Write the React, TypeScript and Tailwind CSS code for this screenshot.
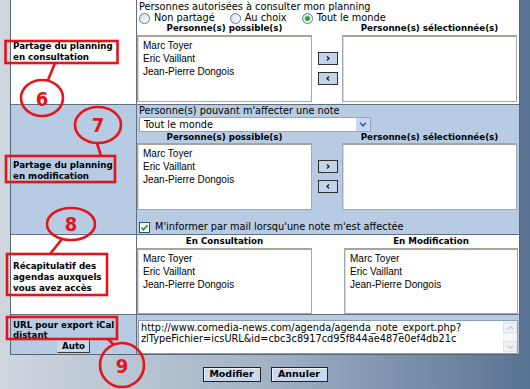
import React from 'react'

const people = ['Marc Toyer', 'Eric Vaillant', 'Jean-Pierre Dongois']

function ListBox({ items = [], className = '' }: { items?: string[]; className?: string }) {
  return (
    <div
      className={`bg-white border border-[#9fa9b4] border-t-2 border-t-[#a9a398] shadow-[inset_1px_0_0_#dedad2] pl-[5px] pt-[2px] font-['Liberation_Sans',Arial,sans-serif] text-[10px] leading-[13px] text-black ${className}`}
    >
      {items.map((i) => (
        <div key={i}>{i}</div>
      ))}
    </div>
  )
}

function MoveBtn({ dir }: { dir: 'r' | 'l' }) {
  return (
    <div className="w-[20px] h-[13px] bg-[#c3d4ea] border border-[#2e2e2e] flex items-center justify-center">
      <svg width="4" height="5" viewBox="0 0 4 5">
        <path
          d={dir === 'r' ? 'M1 0.5 L3 2.5 L1 4.5' : 'M3 0.5 L1 2.5 L3 4.5'}
          stroke="#1a1a1a"
          strokeWidth="1.3"
          fill="none"
        />
      </svg>
    </div>
  )
}

function Radio({ checked = false }: { checked?: boolean }) {
  return (
    <span className="w-[11px] h-[11px] rounded-full border border-[#557aa6] bg-gradient-to-br from-[#d8dde4] to-white flex items-center justify-center mr-[4px]">
      {checked && <span className="w-[5px] h-[5px] rounded-full bg-[#2ea52e]" />}
    </span>
  )
}

function PickLists() {
  return (
    <div className="flex">
      <ListBox className="w-[175px] h-[67px]" items={people} />
      <div className="ml-[6px] w-[20px] flex flex-col gap-[7px] pt-[17px]">
        <MoveBtn dir="r" />
        <MoveBtn dir="l" />
      </div>
      <ListBox className="ml-[4px] w-[175px] h-[67px]" />
    </div>
  )
}

function Headers({ a, b, h }: { a: string; b: string; h: string }) {
  return (
    <div className={`flex items-center font-bold text-[8.7px] ${h}`}>
      <div className="w-[175px] text-center">{a}</div>
      <div className="w-[30px]" />
      <div className="w-[175px] text-center">{b}</div>
    </div>
  )
}

export default function App() {
  const red = '#e3141c'
  return (
    <div className="relative w-[530px] h-[389px] overflow-hidden bg-gradient-to-r from-[#cfd6de] via-[#a2b3c6] to-[#5a7293] font-['DejaVu_Sans',sans-serif] text-black">
      {/* Table */}
      <div className="ml-[10px] w-[510px] border-l border-r border-[#56677a] bg-white">
        {/* Row 6 */}
        <div className="flex h-[105px] border-b border-[#5f7084]">
          <div className="w-[126px] border-r border-[#5f7084] pl-[2px] pt-[41px] font-bold text-[8.7px] leading-[11px]">
            Partage du planning
            <br />
            en consultation
          </div>
          <div className="flex-1 text-[9.75px]">
            <div className="h-[13px] leading-[13px] pl-[2px]">Personnes autorisées à consulter mon planning</div>
            <div className="h-[10px] flex items-center pl-[2px] leading-[10px]">
              <Radio />
              <span className="mr-[15px]">Non partagé</span>
              <Radio />
              <span className="mr-[15px]">Au choix</span>
              <Radio checked />
              <span>Tout le monde</span>
            </div>
            <Headers a="Personne(s) possible(s)" b="Personne(s) sélectionnée(s)" h="h-[12px]" />
            <PickLists />
          </div>
        </div>

        {/* Row 7 */}
        <div className="flex h-[130px] border-b border-[#5f7084] bg-[#b7cce3]">
          <div className="w-[126px] border-r border-[#5f7084] pl-[2px] pt-[55px] font-bold text-[8.7px] leading-[11px]">
            Partage du planning
            <br />
            en modification
          </div>
          <div className="flex-1 text-[9.75px]">
            <div className="h-[12px] leading-[12px] pl-[2px]">Personne(s) pouvant m'affecter une note</div>
            <div className="ml-[2px] w-[232px] h-[15px] bg-white border border-[#8fa6c0] flex items-center">
              <span className="flex-1 pl-[4px] leading-[13px]">Tout le monde</span>
              <span className="w-[14px] h-[13px] bg-[#c6d8f5] flex items-center justify-center">
                <svg width="8" height="5" viewBox="0 0 8 5">
                  <path d="M1 0.8 L4 3.8 L7 0.8" stroke="#3d5f96" strokeWidth="1.6" fill="none" />
                </svg>
              </span>
            </div>
            <Headers a="Personne(s) possible(s)" b="Personne(s) sélectionnée(s)" h="h-[11px]" />
            <PickLists />
            <div className="mt-[11px] h-[12px] flex items-center pl-[2px]">
              <span className="w-[11px] h-[11px] border border-[#2a5685] bg-white flex items-center justify-center mr-[5px]">
                <svg width="9" height="9" viewBox="0 0 9 9">
                  <path d="M1.5 4.5 L3.5 6.8 L7.5 2" stroke="#24a024" strokeWidth="1.8" fill="none" />
                </svg>
              </span>
              <span className="leading-[12px]">M'informer par mail lorsqu'une note m'est affectée</span>
            </div>
          </div>
        </div>

        {/* Row 8 */}
        <div className="flex h-[80px] border-b border-[#5f7084]">
          <div className="w-[126px] border-r border-[#5f7084] pl-[2px] pt-[26px] font-bold text-[8.7px] leading-[11px]">
            Récapitulatif des
            <br />
            agendas auxquels
            <br />
            vous avez accès
          </div>
          <div className="flex-1">
            <div className="flex items-center font-bold text-[8.7px] h-[13px]">
              <div className="w-[175px] text-center">En Consultation</div>
              <div className="w-[32px]" />
              <div className="w-[174px] text-center">En Modification</div>
            </div>
            <div className="flex">
              <ListBox className="w-[175px] h-[66px]" items={people} />
              <ListBox className="ml-[32px] w-[174px] h-[66px]" items={people} />
            </div>
          </div>
        </div>

        {/* Row 9 */}
        <div className="flex h-[40px] border-b border-[#56677a] bg-[#b7cce3]">
          <div className="w-[126px] border-r border-[#5f7084] pl-[2px] pt-[5px] font-bold text-[8.7px] leading-[10px] flex flex-col">
            <div>
              URL pour export iCal
              <br />
              distant
            </div>
            <div className="self-center ml-[-2px] w-[33px] h-[13px] bg-[#cad9ed] border border-[#c9d6e6] border-r-[#3a3a3a] border-b-[#3a3a3a] flex items-center justify-center leading-[11px]">
              Auto
            </div>
          </div>
          <div className="flex-1 pt-[5px]">
            <div className="ml-[1px] w-[380px] h-[34px] bg-white border border-[#8d9fb3] flex">
              <div className="flex-1 pl-[2px] pt-[2px] text-[9.75px] leading-[10.5px] break-all">
                http://www.comedia-news.com/agenda/agenda_note_export.php?
                <br />
                zlTypeFichier=icsURL&amp;id=cbc3c8917cd95f844ae487e0ef4db21c
              </div>
              <div className="w-[14px] flex flex-col justify-between py-[1px] bg-[#f4f6f8]">
                <div className="h-[11px] bg-[#eef1f5] border border-[#dde3ea] flex items-center justify-center">
                  <svg width="7" height="4" viewBox="0 0 7 4">
                    <path d="M0.5 3.5 L3.5 0.8 L6.5 3.5" stroke="#c4ccd6" strokeWidth="1.2" fill="none" />
                  </svg>
                </div>
                <div className="h-[11px] bg-[#eef1f5] border border-[#dde3ea] flex items-center justify-center">
                  <svg width="7" height="4" viewBox="0 0 7 4">
                    <path d="M0.5 0.5 L3.5 3.2 L6.5 0.5" stroke="#c4ccd6" strokeWidth="1.2" fill="none" />
                  </svg>
                </div>
              </div>
            </div>
          </div>
        </div>
      </div>

      {/* Buttons */}
      <div className="flex justify-center gap-[10px] pt-[12px] font-bold text-[9.5px]">
        <div className="w-[58px] h-[15px] bg-[#c8d8ee] border border-[#222] shadow-[inset_1px_1px_0_#eef3fa] flex items-center justify-center">
          Modifier
        </div>
        <div className="w-[57px] h-[15px] bg-[#c8d8ee] border border-[#222] shadow-[inset_1px_1px_0_#eef3fa] flex items-center justify-center">
          Annuler
        </div>
      </div>

      {/* Annotations */}
      <svg className="absolute inset-0 pointer-events-none" width="530" height="389" viewBox="0 0 530 389">
        <g stroke={red} strokeWidth="2.6" fill="none">
          <rect x="5.5" y="41" width="112" height="22" />
          <rect x="6" y="156" width="109" height="26" />
          <rect x="7" y="254" width="100" height="41" />
          <rect x="7" y="317" width="110" height="22" />
          <ellipse cx="42" cy="98" rx="21" ry="18" />
          <ellipse cx="98" cy="125" rx="23" ry="18" />
          <ellipse cx="71" cy="224" rx="24" ry="16" />
          <ellipse cx="122" cy="365" rx="22" ry="22" />
          <line x1="55" y1="63" x2="48" y2="80" />
          <line x1="97" y1="143" x2="101" y2="156" />
          <line x1="62" y1="239" x2="50" y2="254" />
          <line x1="108" y1="339" x2="114" y2="345" />
        </g>
        <g fill={red} fontFamily="'DejaVu Sans Condensed','DejaVu Sans',sans-serif" fontWeight="bold" fontSize="20" textAnchor="middle">
          <text x="42" y="106">6</text>
          <text x="98" y="132">7</text>
          <text x="71" y="231">8</text>
          <text x="122" y="373">9</text>
        </g>
      </svg>
    </div>
  )
}
